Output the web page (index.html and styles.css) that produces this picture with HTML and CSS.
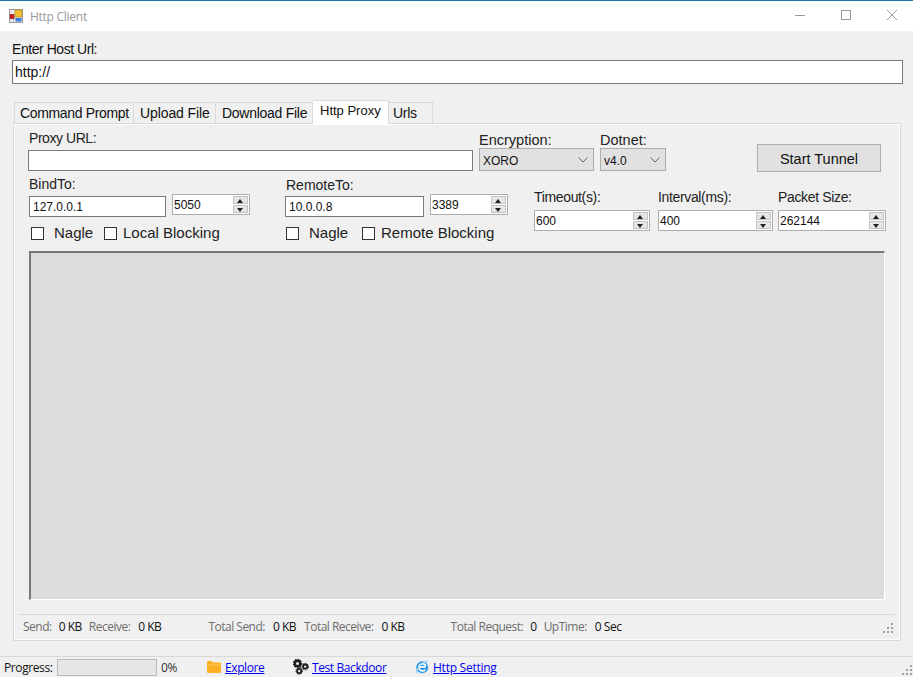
FILE: index.html
```html
<!DOCTYPE html>
<html lang="en">
<head>
<meta charset="utf-8">
<title>Http Client</title>
<link rel="stylesheet" href="styles.css">
</head>
<body>
<div class="window">
  <header class="titlebar">
    <svg class="app-icon" viewBox="0 0 14 14" width="14" height="14">
      <rect x="0.5" y="0.5" width="13" height="13" fill="#e8e8e8" stroke="#9c9c9c"/>
      <path d="M0 9.5h6M4.5 10v4" stroke="#b5b5b5" fill="none"/>
      <rect x="1" y="5.5" width="4" height="4" fill="#d42026" stroke="#8a1c1c" stroke-width="0.7"/>
      <rect x="6" y="1" width="7" height="7" fill="#f5c22e" stroke="#b08a28" stroke-width="0.7"/>
      <rect x="6.5" y="9" width="6" height="3.5" fill="#3d7bdc"/>
    </svg>
    <span class="title">Http Client</span>
    <div class="winctrls">
      <svg class="ctl" width="12" height="12" viewBox="0 0 12 12"><path d="M1 6.5h10" stroke="#999" fill="none"/></svg>
      <svg class="ctl" width="12" height="12" viewBox="0 0 12 12"><rect x="1.5" y="1.5" width="9" height="9" stroke="#999" fill="none"/></svg>
      <svg class="ctl" width="12" height="12" viewBox="0 0 12 12"><path d="M1 1l10 10M11 1L1 11" stroke="#999" fill="none"/></svg>
    </div>
  </header>

  <section class="host">
    <label class="host-label">Enter Host Url:</label>
    <div class="host-input">http://</div>
  </section>

  <nav class="tabs">
    <div class="tab tab-1">Command Prompt</div>
    <div class="tab tab-2">Upload File</div>
    <div class="tab tab-3">Download File</div>
    <div class="tab active">Http Proxy</div>
    <div class="tab tab-5">Urls</div>
  </nav>

  <main class="panel">
    <div class="row-a">
      <div class="proxy">
        <div class="lbl proxy-lbl">Proxy URL:</div>
        <div class="field proxy-field"></div>
      </div>
      <div class="combo-group enc">
        <div class="lbl combo-lbl">Encryption:</div>
        <div class="combo"><span>XORO</span><svg width="10" height="6" viewBox="0 0 10 6"><path d="M0.5 0.5L5 5l4.5-4.5" stroke="#666" fill="none"/></svg></div>
      </div>
      <div class="combo-group net">
        <div class="lbl combo-lbl">Dotnet:</div>
        <div class="combo"><span>v4.0</span><svg width="10" height="6" viewBox="0 0 10 6"><path d="M0.5 0.5L5 5l4.5-4.5" stroke="#666" fill="none"/></svg></div>
      </div>
      <div class="btn">Start Tunnel</div>
    </div>

    <div class="row-b">
      <div class="endpoint bind">
        <div class="lbl">BindTo:</div>
        <div class="ep-fields">
          <div class="field small host-f">127.0.0.1</div>
          <div class="spin port"><span>5050</span><div class="arrows"><i class="up"></i><i class="down"></i></div></div>
        </div>
        <div class="checks">
          <div class="cb"></div><span class="cb-t t-nagle">Nagle</span>
          <div class="cb"></div><span class="cb-t">Local Blocking</span>
        </div>
      </div>
      <div class="endpoint remote">
        <div class="lbl remote-lbl">RemoteTo:</div>
        <div class="ep-fields">
          <div class="field small host-r">10.0.0.8</div>
          <div class="spin port"><span>3389</span><div class="arrows"><i class="up"></i><i class="down"></i></div></div>
        </div>
        <div class="checks">
          <div class="cb"></div><span class="cb-t t-nagle t-nagle-r">Nagle</span>
          <div class="cb"></div><span class="cb-t">Remote Blocking</span>
        </div>
      </div>
      <div class="timing t-time">
        <div class="lbl">Timeout(s):</div>
        <div class="spin"><span>600</span><div class="arrows"><i class="up"></i><i class="down"></i></div></div>
      </div>
      <div class="timing t-int">
        <div class="lbl">Interval(ms):</div>
        <div class="spin"><span>400</span><div class="arrows"><i class="up"></i><i class="down"></i></div></div>
      </div>
      <div class="timing t-pack">
        <div class="lbl">Packet Size:</div>
        <div class="spin"><span>262144</span><div class="arrows"><i class="up"></i><i class="down"></i></div></div>
      </div>
    </div>

    <div class="log"></div>

    <div class="stats">
      <span class="k k1">Send:</span><span class="v v1">0 KB</span>
      <span class="k k2">Receive:</span><span class="v v2">0 KB</span>
      <span class="k k3">Total Send:</span><span class="v v3">0 KB</span>
      <span class="k k4">Total Receive:</span><span class="v v4">0 KB</span>
      <span class="k k5">Total Request:</span><span class="v v5">0</span>
      <span class="k k6">UpTime:</span><span class="v v6">0 Sec</span>
      <svg class="grip" width="11" height="11" viewBox="0 0 11 11"><path d="M8 0h2v2H8zM4 4h2v2H4zM8 4h2v2H8zM0 8h2v2H0zM4 8h2v2H4zM8 8h2v2H8z" fill="#a0a0a0"/></svg>
    </div>
  </main>

  <footer class="statusbar">
    <span class="progress-lbl">Progress:</span>
    <div class="progress"></div>
    <span class="pct">0%</span>
    <svg class="s-ico ico-folder" width="14" height="12" viewBox="0 0 14 12"><path d="M0 1.5C0 .7.6 0 1.3 0h3.2l1.4 1.6h6.8c.7 0 1.3.6 1.3 1.3v7.8c0 .7-.6 1.3-1.3 1.3H1.3C.6 12 0 11.4 0 10.7z" fill="#fdb023"/><path d="M0 3.6h14v.8H0z" fill="#ffd065"/></svg>
    <a class="link l-explore">Explore</a>
    <svg class="s-ico ico-gears" width="16" height="16" viewBox="0 0 16 16">
      <circle cx="4.5" cy="4.5" r="2.7" fill="none" stroke="#1c1c1c" stroke-width="2.4"/>
      <circle cx="4.5" cy="4.5" r="4.2" fill="none" stroke="#1c1c1c" stroke-width="1.4" stroke-dasharray="1.4 1.4"/>
      <circle cx="12.2" cy="7.6" r="2.1" fill="none" stroke="#1c1c1c" stroke-width="1.8"/>
      <circle cx="12.2" cy="7.6" r="3.3" fill="none" stroke="#1c1c1c" stroke-width="1" stroke-dasharray="1.2 1"/>
      <circle cx="6.2" cy="12" r="2.1" fill="none" stroke="#1c1c1c" stroke-width="1.8"/>
      <circle cx="6.2" cy="12" r="3.3" fill="none" stroke="#1c1c1c" stroke-width="1" stroke-dasharray="1.2 1"/>
    </svg>
    <a class="link l-test">Test Backdoor</a>
    <svg class="s-ico ico-ie" width="14" height="14" viewBox="0 0 14 14">
      <circle cx="7.2" cy="7.2" r="6" fill="#2f9be8"/>
      <path d="M3.6 6.8h7.2M10.2 9.8a3.6 3.6 0 1 1 .6-4" stroke="#fff" stroke-width="1.7" fill="none"/>
      <path d="M2.2 13.4C-.3 12 4.8 2.4 13.4 .8" stroke="#9ed6f6" stroke-width="1.1" fill="none"/>
    </svg>
    <a class="link l-http">Http Setting</a>
    <svg class="grip grip-main" width="11" height="11" viewBox="0 0 11 11"><path d="M8 0h2v2H8zM4 4h2v2H4zM8 4h2v2H8zM0 8h2v2H0zM4 8h2v2H4zM8 8h2v2H8z" fill="#a0a0a0"/></svg>
  </footer>
</div>
</body>
</html>
```
FILE: styles.css
```css
* { box-sizing: border-box; }
html, body { margin: 0; padding: 0; }
body { width: 913px; height: 677px; overflow: hidden; background: #f0f0f0; color: #111; font-family: "Liberation Sans", Arial, sans-serif; font-size: 14px; }
.window { display: flex; flex-direction: column; height: 677px; }

.titlebar { height: 31px; flex: none; display: flex; align-items: center; background: #fff; border-top: 1px solid #1c77ac; padding: 0 0 0 9px; }
.app-icon { flex: none; margin-top: -1px; }
.title { margin-left: 7px; font-family: "Open Sans", sans-serif; font-size: 12px; letter-spacing: -0.27px; color: #999; }
.winctrls { margin-left: auto; display: flex; gap: 34px; padding-right: 15px; margin-top: -3px; }

.host { padding: 10px 10px 0 12px; }
.host-label { display: block; height: 19px; line-height: 16px; font-size: 14px; letter-spacing: -0.45px; }
.host-input { height: 24px; border: 1px solid #777; background: #fff; padding-left: 2px; font-size: 14px; line-height: 22px; }

.tabs { display: flex; align-items: flex-end; height: 24px; margin: 16px 0 0 14px; flex: none; position: relative; z-index: 1; }
.tab { height: 21px; border: 1px solid #dadada; border-left: 0; border-bottom: 0; background: #f0f0f0; line-height: 21px; padding-left: 6px; font-size: 14px; letter-spacing: -0.27px; margin-bottom: 1px; white-space: nowrap; }
.tab-1 { width: 120px; border-left: 1px solid #dadada; padding-left: 5px; letter-spacing: -0.35px; }
.tab-2 { width: 82px; letter-spacing: -0.1px; }
.tab-3 { width: 97px; }
.tab.active { width: 76px; height: 24px; background: #fff; line-height: 20px; padding-left: 7px; margin-bottom: 0; border-left: 0; font-size: 13px; letter-spacing: 0; }
.tab-5 { width: 44px; padding-left: 4px; }

.panel { margin: -1px 0 0 13px; width: 888px; height: 518px; flex: none; border: 1px solid #d9d9d9; box-shadow: inset 0 0 0 1px #fff; padding: 6px 0 0 14px; position: relative; }

.lbl { font-size: 14px; line-height: 16px; color: #222; white-space: nowrap; }
.row-a { display: flex; height: 46px; }
.proxy { width: 445px; }
.proxy-lbl { height: 20px; padding-left: 1px; letter-spacing: -0.45px; }
.field { background: #fff; border: 1px solid #7a7a7a; }
.proxy-field { height: 21px; }
.combo-group { display: flex; flex-direction: column; }
.enc { width: 115px; margin-left: 6px; }
.net { width: 66px; margin-left: 6px; }
.combo-lbl { height: 18px; padding-top: 2px; font-size: 14.5px; }
.combo { height: 23px; background: #e1e1e1; border: 1px solid #adadad; display: flex; align-items: center; justify-content: space-between; padding: 2px 5px 0 3px; font-size: 12px; }
.combo svg { margin-top: -2px; }
.btn { margin: 14px 0 0 91px; width: 124px; height: 28px; background: #e1e1e1; border: 1px solid #adadad; text-align: center; line-height: 28px; font-size: 14.5px; }

.row-b { display: flex; height: 75px; }
.endpoint { flex: none; }
.bind { width: 257px; margin-left: 1px; }
.remote { width: 249px; }
.remote-lbl { padding-top: 1px; height: 16px; }
.ep-fields { display: flex; align-items: flex-start; gap: 6px; margin-top: 2px; }
.small { height: 21px; margin-top: 2px; font-size: 12px; line-height: 21px; padding-left: 3px; border-color: #7a7a7a; }
.host-f { width: 137px; }
.host-r { width: 139px; margin-left: -1px; padding-left: 3px; }
.spin { position: relative; height: 21px; background: #fff; border: 1px solid #adadad; font-size: 12px; line-height: 21px; padding-left: 1px; display: flex; justify-content: space-between; }
.port { width: 78px; }
.arrows { width: 15px; margin: 1px; display: flex; flex-direction: column; gap: 1px; flex: none; }
.arrows i { flex: 1; background: #e6e6e6; border: 1px solid #c4c4c4; position: relative; display: block; }
.arrows i::after { content: ""; position: absolute; left: 3px; width: 0; height: 0; border-left: 3.5px solid transparent; border-right: 3.5px solid transparent; }
.arrows .up::after { top: 2px; border-bottom: 4px solid #222; }
.arrows .down::after { top: 2px; border-top: 4px solid #222; }
.checks { display: flex; align-items: center; margin-top: 9px; height: 14px; padding-left: 2px; }
.cb { width: 13px; height: 13px; background: #fff; border: 1px solid #333; flex: none; }
.cb-t { margin-left: 6px; font-size: 15px; line-height: 14px; color: #222; white-space: nowrap; }
.t-nagle { margin-left: 10px; margin-right: 12px; width: 38px; }
.t-nagle-r { margin-right: 15px; }
.remote .checks { padding-left: 0; }
.timing { flex: none; margin-top: 13px; }
.timing .lbl { height: 21px; font-size: 14px; letter-spacing: -0.35px; }
.t-time { width: 116px; margin-left: -1px; }
.t-int { width: 115px; margin-left: 8px; }
.t-pack { width: 108px; margin-left: 5px; }

.log { margin: 0 0 0 1px; width: 856px; height: 349px; background: #dcdcdc; border-top: 2px solid #777; border-left: 2px solid #777; border-right: 1px solid #fff; border-bottom: 1px solid #fff; }

.stats { margin: 14px 0 0 -9px; width: 876px; border-top: 1px solid #d8d8d8; height: 24px; display: flex; align-items: center; font-family: "Open Sans", sans-serif; font-size: 12px; letter-spacing: -0.5px; padding-left: 4px; position: relative; white-space: nowrap; }
.k { color: #6d6d6d; }
.v { color: #111; margin-left: 8px; }
.v1 { margin-left: 7px; }
.k2 { margin-left: 7px; }
.k3 { margin-left: 47px; }
.k4 { margin-left: 8px; }
.k5 { margin-left: 46px; }
.v5 { margin-left: 7px; }
.k6 { margin-left: 7px; }
.grip { position: absolute; right: 1px; bottom: 4px; }

.statusbar { margin-top: 15px; height: 21px; flex: 1; border-top: 1px solid #d8d8d8; display: flex; align-items: center; padding-left: 4px; font-family: "Open Sans", sans-serif; font-size: 12px; letter-spacing: -0.4px; position: relative; white-space: nowrap; }
.progress-lbl { width: 53px; color: #111; }
.progress { width: 100px; height: 17px; background: #e6e6e6; border: 1px solid #bcbcbc; flex: none; }
.pct { margin-left: 4px; width: 46px; color: #333; }
.link { color: #00e; text-decoration: underline; }
.s-ico { flex: none; }
.l-explore { margin-left: 4px; width: 68px; }
.l-test { margin-left: 3px; width: 103px; }
.ico-ie { margin-left: 0; }
.l-http { margin-left: 4px; letter-spacing: -0.25px; }
.grip-main { right: 0; bottom: 1px; }
```
